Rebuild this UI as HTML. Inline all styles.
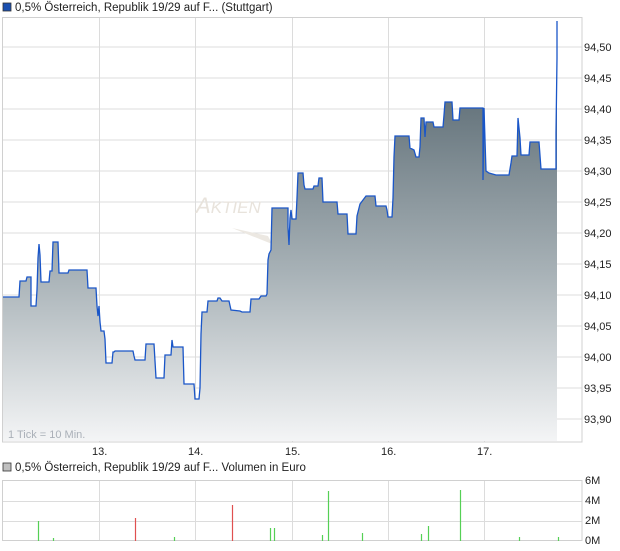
<!DOCTYPE html>
<html><head><meta charset="utf-8"><style>
body{margin:0;background:#fff;width:620px;height:546px;overflow:hidden;font-family:"Liberation Sans",sans-serif}
</style></head><body>
<svg width="620" height="546" xmlns="http://www.w3.org/2000/svg" font-family="Liberation Sans, sans-serif">
<defs>
<linearGradient id="g" gradientUnits="userSpaceOnUse" x1="0" y1="100" x2="0" y2="442">
<stop offset="0" stop-color="#65747c"/><stop offset="0.5" stop-color="#a7b1b6"/><stop offset="1" stop-color="#f4f5f6"/>
</linearGradient>
<path id="p" fill="none" d="M3,297 L19,297 L20,281 L26,281 L27,277 L31,277 L31,306 L36,306 L37,290 L38,258 L39,244 L40,255 L41,282 L49,282 L50,271 L52,271 L53,242 L58,242 L59,273 L68,273 L69,270 L87,270 L88,288 L96,288 L97,306 L98,316 L99,306 L100,322 L101,331 L104,331 L105,339 L106,363 L112,363 L113,352 L114,352 L115,351 L133,351 L134,356 L135,360 L145,360 L146,344 L154,344 L155,361 L156,378 L164,378 L165,355 L171,355 L172,340 L173,347 L183,347 L184,384 L194,384 L195,399 L199,399 L200,388 L201,334 L202,312 L207,312 L208,301 L217,301 L218,298 L220,298 L222,301 L229,301 L231,310 L240,311 L242,312 L250,312 L251,299 L259,299 L261,296 L266,296 L267,294 L268,260 L269,254 L271,250 L272,208 L288,208 L288,227 L289,245 L290,218 L291,210 L292,219 L296,219 L297,198 L298,173 L303,173 L304,185 L305,189 L313,189 L314,186 L318,186 L319,178 L322,178 L323,202 L337,202 L338,214 L347,214 L348,234 L356,234 L357,216 L360,204 L366,196 L375,196 L376,206 L386,206 L387,210 L388,217 L392,217 L393,198 L394,157 L395,136 L409,136 L410,148 L414,150 L416,157 L419,157 L420,147 L421,118 L424,118 L425,137 L426,122 L433,122 L434,127 L443,127 L444,115 L445,102 L452,102 L453,120 L459,120 L460,108 L483,108 L483,180 L484,108 L485,140 L486,171 L489,173 L496,175 L509,175 L511,163 L512,156 L517,156 L518,118 L520,138 L521,155 L529,155 L530,142 L539,142 L541,169 L556,169 L556,133 L557,58 L557,21"/>
</defs>
<rect x="3" y="3" width="8" height="8" fill="#1a4fb0" stroke="#333" stroke-width="0.8"/>
<text x="15" y="11" font-size="11.5" fill="#222">0,5% Österreich, Republik 19/29 auf F... (Stuttgart)</text>
<g stroke="#dcdcdc" stroke-width="1">
<line x1="2" y1="47" x2="582" y2="47"/><line x1="2" y1="78" x2="582" y2="78"/><line x1="2" y1="109" x2="582" y2="109"/><line x1="2" y1="140" x2="582" y2="140"/><line x1="2" y1="171" x2="582" y2="171"/><line x1="2" y1="202" x2="582" y2="202"/><line x1="2" y1="233" x2="582" y2="233"/><line x1="2" y1="264" x2="582" y2="264"/><line x1="2" y1="295" x2="582" y2="295"/><line x1="2" y1="326" x2="582" y2="326"/><line x1="2" y1="357" x2="582" y2="357"/><line x1="2" y1="388" x2="582" y2="388"/><line x1="2" y1="419" x2="582" y2="419"/>
<line x1="99.5" y1="17" x2="99.5" y2="442"/><line x1="195.5" y1="17" x2="195.5" y2="442"/><line x1="292.5" y1="17" x2="292.5" y2="442"/><line x1="388.5" y1="17" x2="388.5" y2="442"/><line x1="484.5" y1="17" x2="484.5" y2="442"/>
</g>
<rect x="2.5" y="17.5" width="579.5" height="424.5" fill="none" stroke="#d0d0d0"/>
<text x="196" y="213" font-size="22" font-style="italic" fill="#e8e3dc">A<tspan font-size="17">KTIEN</tspan></text>
<path d="M232,228 L268,236 L272,244 Z" fill="#ece8e2"/>
<path d="M3,297 L19,297 L20,281 L26,281 L27,277 L31,277 L31,306 L36,306 L37,290 L38,258 L39,244 L40,255 L41,282 L49,282 L50,271 L52,271 L53,242 L58,242 L59,273 L68,273 L69,270 L87,270 L88,288 L96,288 L97,306 L98,316 L99,306 L100,322 L101,331 L104,331 L105,339 L106,363 L112,363 L113,352 L114,352 L115,351 L133,351 L134,356 L135,360 L145,360 L146,344 L154,344 L155,361 L156,378 L164,378 L165,355 L171,355 L172,340 L173,347 L183,347 L184,384 L194,384 L195,399 L199,399 L200,388 L201,334 L202,312 L207,312 L208,301 L217,301 L218,298 L220,298 L222,301 L229,301 L231,310 L240,311 L242,312 L250,312 L251,299 L259,299 L261,296 L266,296 L267,294 L268,260 L269,254 L271,250 L272,208 L288,208 L288,227 L289,245 L290,218 L291,210 L292,219 L296,219 L297,198 L298,173 L303,173 L304,185 L305,189 L313,189 L314,186 L318,186 L319,178 L322,178 L323,202 L337,202 L338,214 L347,214 L348,234 L356,234 L357,216 L360,204 L366,196 L375,196 L376,206 L386,206 L387,210 L388,217 L392,217 L393,198 L394,157 L395,136 L409,136 L410,148 L414,150 L416,157 L419,157 L420,147 L421,118 L424,118 L425,137 L426,122 L433,122 L434,127 L443,127 L444,115 L445,102 L452,102 L453,120 L459,120 L460,108 L483,108 L483,180 L484,108 L485,140 L486,171 L489,173 L496,175 L509,175 L511,163 L512,156 L517,156 L518,118 L520,138 L521,155 L529,155 L530,142 L539,142 L541,169 L556,169 L556,133 L557,58 L557,441 L3,441 Z" fill="url(#g)"/>
<use href="#p" stroke="#1a56c8" stroke-width="1.3"/>
<text x="8" y="438" font-size="11" fill="#aab0b8">1 Tick = 10 Min.</text>
<g font-size="11" fill="#222">
<text x="584" y="51">94,50</text><text x="584" y="82">94,45</text><text x="584" y="113">94,40</text><text x="584" y="144">94,35</text><text x="584" y="175">94,30</text><text x="584" y="206">94,25</text><text x="584" y="237">94,20</text><text x="584" y="268">94,15</text><text x="584" y="299">94,10</text><text x="584" y="330">94,05</text><text x="584" y="361">94,00</text><text x="584" y="392">93,95</text><text x="584" y="423">93,90</text>
<text x="92" y="455">13.</text><text x="188" y="455">14.</text><text x="285" y="455">15.</text><text x="381" y="455">16.</text><text x="477" y="455">17.</text>
</g>
<rect x="3" y="463" width="8" height="8" fill="#c0c0c0" stroke="#333" stroke-width="0.8"/>
<text x="15" y="471" font-size="11.5" fill="#222">0,5% Österreich, Republik 19/29 auf F... Volumen in Euro</text>
<g stroke="#dcdcdc">
<line x1="2" y1="501.5" x2="582" y2="501.5"/><line x1="2" y1="521.5" x2="582" y2="521.5"/>
<line x1="99.5" y1="480" x2="99.5" y2="541"/><line x1="195.5" y1="480" x2="195.5" y2="541"/><line x1="292.5" y1="480" x2="292.5" y2="541"/><line x1="388.5" y1="480" x2="388.5" y2="541"/><line x1="484.5" y1="480" x2="484.5" y2="541"/>
</g>
<rect x="2.5" y="480.5" width="579.5" height="60" fill="none" stroke="#d0d0d0"/>
<g stroke-width="1.2">
<line x1="38.5" y1="541" x2="38.5" y2="521" stroke="#55d055"/>
<line x1="53.5" y1="541" x2="53.5" y2="538" stroke="#55d055"/>
<line x1="135.5" y1="541" x2="135.5" y2="518" stroke="#e05050"/>
<line x1="174.5" y1="541" x2="174.5" y2="537" stroke="#55d055"/>
<line x1="232.5" y1="541" x2="232.5" y2="505" stroke="#e05050"/>
<line x1="270.5" y1="541" x2="270.5" y2="528" stroke="#55d055"/>
<line x1="274.5" y1="541" x2="274.5" y2="528" stroke="#55d055"/>
<line x1="322.5" y1="541" x2="322.5" y2="535" stroke="#55d055"/>
<line x1="328.5" y1="541" x2="328.5" y2="491" stroke="#55d055"/>
<line x1="362.5" y1="541" x2="362.5" y2="533" stroke="#55d055"/>
<line x1="421.5" y1="541" x2="421.5" y2="534" stroke="#55d055"/>
<line x1="428.5" y1="541" x2="428.5" y2="526" stroke="#55d055"/>
<line x1="460.5" y1="541" x2="460.5" y2="490" stroke="#55d055"/>
<line x1="519.5" y1="541" x2="519.5" y2="537" stroke="#55d055"/>
<line x1="558.5" y1="541" x2="558.5" y2="537" stroke="#55d055"/>
</g>
<g font-size="11" fill="#222">
<text x="585" y="484">6M</text><text x="585" y="504">4M</text><text x="585" y="524">2M</text><text x="585" y="544">0M</text>
</g>
</svg>
</body></html>
